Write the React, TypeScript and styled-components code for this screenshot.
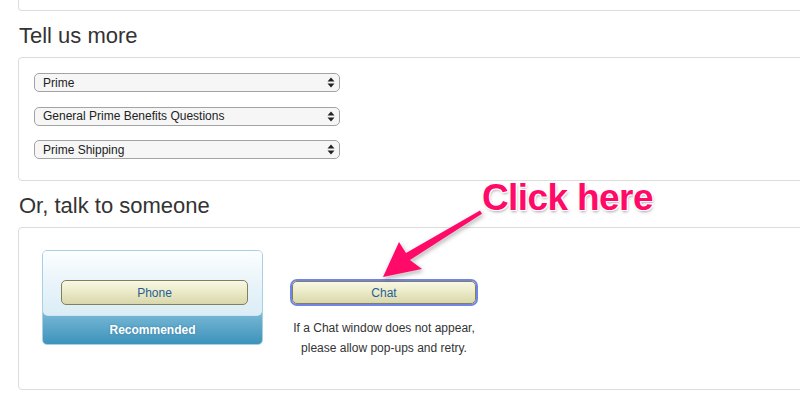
import React from 'react';
import styled, { createGlobalStyle } from 'styled-components';

const GlobalStyle = createGlobalStyle`
  body {
    margin: 0;
    background: #fff;
    overflow: hidden;
    font-family: "Liberation Sans", Arial, sans-serif;
  }
`;

const selects = ['Prime', 'General Prime Benefits Questions', 'Prime Shipping'];

export default function App() {
  return (
    <Page>
      <GlobalStyle />
      <TopPanel />

      <Heading>Tell us more</Heading>
      <SelectPanel>
        {selects.map((label) => (
          <SelectBox key={label}>
            <span>{label}</span>
            <svg width="8" height="11" viewBox="0 0 8 11">
              <path d="M4 0.5 L7.5 4.5 H0.5 Z" fill="#222" />
              <path d="M4 10.5 L7.5 6.5 H0.5 Z" fill="#222" />
            </svg>
          </SelectBox>
        ))}
      </SelectPanel>

      <Heading>Or, talk to someone</Heading>
      <ContactPanel>
        <Card>
          <CardTop>
            <GreenButton>Phone</GreenButton>
          </CardTop>
          <Band>Recommended</Band>
        </Card>
        <ChatColumn>
          <GreenButton focused>Chat</GreenButton>
          <Note>
            If a Chat window does not appear,
            <br />
            please allow pop-ups and retry.
          </Note>
        </ChatColumn>
      </ContactPanel>

      <Callout>Click here</Callout>
      <ArrowLayer width="800" height="400" viewBox="0 0 800 400">
        <polygon
          points="383,277 399,242 406,253 480,210.5 482,213.8 410,260 422,269"
          fill="#ff0a68"
        />
      </ArrowLayer>
    </Page>
  );
}

const Page = styled.div`
  position: relative;
  width: 830px;
  height: 400px;
  padding-left: 18px;
`;

const TopPanel = styled.div`
  height: 10px;
  border: 1px solid #dcdcdc;
  border-top: none;
  border-radius: 0 0 4px 4px;
`;

const Heading = styled.h2`
  margin: 12px 0 8px 1px;
  font-size: 22px;
  line-height: 26px;
  font-weight: 400;
  color: #333;
`;

const Panel = styled.div`
  border: 1px solid #dcdcdc;
  border-radius: 4px;
`;

const SelectPanel = styled(Panel)`
  display: flex;
  flex-direction: column;
  gap: 14.5px;
  padding: 15px 0 21px 15px;
`;

const SelectBox = styled.div`
  box-sizing: border-box;
  width: 306px;
  height: 19px;
  display: flex;
  align-items: center;
  justify-content: space-between;
  padding: 0 4px 0 8px;
  border: 1px solid #a3a3a3;
  border-radius: 5px;
  background: #f6f6f6;
  font-size: 12px;
  color: #222;
`;

const ContactPanel = styled(Panel)`
  display: flex;
  align-items: flex-start;
  gap: 27px;
  height: 163px;
  box-sizing: border-box;
  padding: 22px 0 0 23px;
`;

const Card = styled.div`
  width: 219px;
  height: 93px;
  border: 1px solid #a8d0e3;
  border-radius: 5px;
  background: linear-gradient(#c7e4f1, #8cc4de 55%, #3d93bb);
  display: flex;
  flex-direction: column;
  overflow: hidden;
`;

const CardTop = styled.div`
  height: 65px;
  box-sizing: border-box;
  padding: 29px 0 0 18px;
  border-radius: 0 0 5px 5px;
  border-bottom: 1px solid #cfe6f2;
  background: linear-gradient(#fcfefe, #e9f4fa 50%, #dbedf6);
`;

const Band = styled.div`
  flex: 1;
  display: flex;
  align-items: center;
  justify-content: center;
  color: #fff;
  font-size: 12px;
  font-weight: 700;
  text-shadow: 0 0 2px rgba(40, 100, 140, 0.6);
`;

const GreenButton = styled.div<{ focused?: boolean }>`
  box-sizing: border-box;
  width: ${(p) => (p.focused ? '184px' : '187px')};
  height: ${(p) => (p.focused ? '23px' : '25px')};
  margin: ${(p) => (p.focused ? '2px' : '0')};
  display: flex;
  align-items: center;
  justify-content: center;
  border: 1px solid #80805f;
  border-radius: 5px;
  background: linear-gradient(#f8f8e6, #ecebc8 45%, #d8d7ac);
  box-shadow: ${(p) => (p.focused ? '0 0 0 2px #7284e6' : 'none')};
  color: #1f5f96;
  font-size: 12px;
`;

const ChatColumn = styled.div`
  width: 188px;
  padding-top: 29px;
  display: flex;
  flex-direction: column;
  align-items: flex-start;
`;

const Note = styled.p`
  width: 188px;
  margin: 13px 0 0;
  text-align: center;
  font-size: 12px;
  line-height: 19.5px;
  color: #333;
`;

const Callout = styled.div`
  position: absolute;
  left: 482px;
  top: 177px;
  font-size: 37px;
  font-weight: 700;
  letter-spacing: -0.6px;
  color: #ff0a68;
  text-shadow: -1px -1px 0 #fff, 1px -1px 0 #fff, -1px 1px 0 #fff, 1px 1px 0 #fff,
    1px 2px 3px rgba(0, 0, 0, 0.35);
`;

const ArrowLayer = styled.svg`
  position: absolute;
  left: 0;
  top: 0;
  pointer-events: none;
  filter: drop-shadow(0 0 1px #fff) drop-shadow(1px 2px 2px rgba(0, 0, 0, 0.3));
`;
